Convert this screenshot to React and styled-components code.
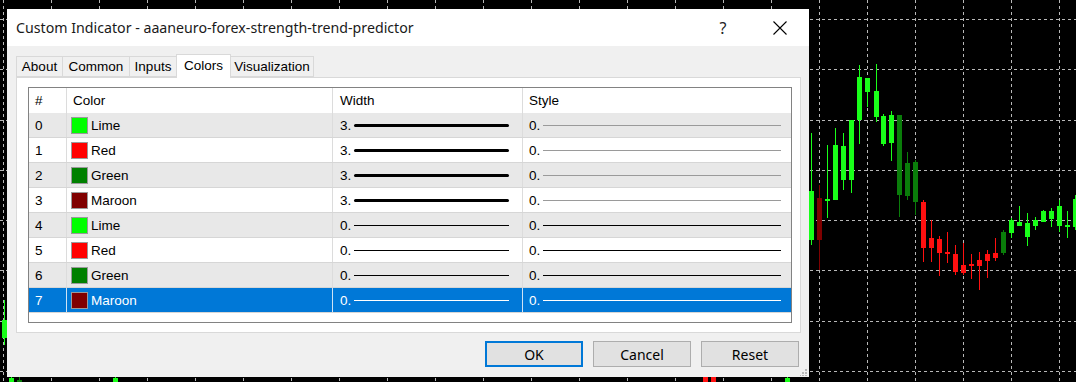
import React from 'react';
import styled, { createGlobalStyle } from 'styled-components';

const GlobalStyle = createGlobalStyle`
  html, body { margin: 0; padding: 0; background: #000; }
  body { width: 1076px; height: 382px; overflow: hidden; }
  * { box-sizing: border-box; }
`;

const Desktop = styled.div`
  position: relative;
  width: 1076px;
  height: 382px;
  background: #000;
  overflow: hidden;
`;

const ChartSvg = styled.svg`
  display: block;
`;

const Dialog = styled.div`
  position: absolute;
  left: 7px;
  top: 9px;
  width: 802px;
  height: 368px;
  background: #f0f0f0;
  display: flex;
  flex-direction: column;
  font-family: "Liberation Sans", Arial, sans-serif;
  color: #000;
`;

const TitleBar = styled.div`
  height: 37px;
  background: #fff;
  display: flex;
  align-items: center;
`;

const Title = styled.div`
  flex: 1;
  padding-left: 9px;
  font-family: "Noto Sans", "Open Sans", sans-serif;
  font-size: 14.2px;
  white-space: nowrap;
  color: #1a1a1a;
`;

const TitleButton = styled.div`
  width: ${(p) => p.$w}px;
  height: 37px;
  display: flex;
  align-items: center;
  justify-content: center;
  font-family: "Noto Sans", sans-serif;
  font-size: 16px;
  color: #222;
`;

const TabStrip = styled.div`
  display: flex;
  align-items: flex-end;
  height: 23px;
  margin-top: 8px;
  padding-left: 9px;
  position: relative;
  z-index: 1;
`;

const Tab = styled.div`
  width: ${(p) => p.$w}px;
  height: ${(p) => (p.$active ? 24 : 21)}px;
  margin-right: -1px;
  border: 1px solid #d9d9d9;
  border-bottom: ${(p) => (p.$active ? 'none' : '1px solid #d9d9d9')};
  background: ${(p) => (p.$active ? '#fff' : '#f0f0f0')};
  display: flex;
  align-items: center;
  justify-content: center;
  font-size: 13.5px;
  padding-bottom: ${(p) => (p.$active ? 3 : 0)}px;
  position: relative;
  z-index: ${(p) => (p.$active ? 2 : 1)};
  margin-bottom: ${(p) => (p.$active ? -1 : 0)}px;
`;

const Panel = styled.div`
  margin-left: 9px;
  width: 785px;
  height: 256px;
  background: #fff;
  border: 1px solid #d9d9d9;
  padding: 9px 0 0 11px;
`;

const ListView = styled.div`
  width: 764px;
  height: 236px;
  border: 1px solid #828282;
  background: #fff;
  display: flex;
  flex-direction: column;
`;

const Row = styled.div`
  display: grid;
  grid-template-columns: 38px 266px 190px 1fr;
  height: 25px;
  border-bottom: ${(p) => (p.$header ? 'none' : '1px solid #d6d6d6')};
  background: ${(p) => (p.$selected ? '#0078d7' : p.$shade ? '#e8e8e8' : '#fff')};
  color: ${(p) => (p.$selected ? '#fff' : '#000')};
`;

const Cell = styled.div`
  display: flex;
  align-items: center;
  padding-left: ${(p) => p.$pl ?? 6}px;
  padding-right: ${(p) => p.$pr ?? 0}px;
  font-size: 13.5px;
  border-right: ${(p) => (p.$last ? 'none' : `1px solid ${p.$selected ? '#cfe3f5' : '#dcdcdc'}`)};
  white-space: nowrap;
`;

const Swatch = styled.span`
  width: 17px;
  height: 17px;
  border: 1px solid #9a9a9a;
  background: ${(p) => p.$color};
  margin-right: 3px;
  flex: none;
`;

const LineSample = styled.span`
  flex: 1;
  height: ${(p) => p.$thick}px;
  border-radius: ${(p) => (p.$thick > 1 ? 2 : 0)}px;
  background: ${(p) => p.$color};
  margin-left: 3px;
`;

const ButtonRow = styled.div`
  display: flex;
  justify-content: flex-end;
  gap: 10px;
  padding: 8px 10px 0 0;
`;

const Button = styled.div`
  width: 98px;
  height: 26px;
  background: #e1e1e1;
  border: ${(p) => (p.$primary ? '2px solid #0078d7' : '1px solid #adadad')};
  display: flex;
  align-items: center;
  justify-content: center;
  font-family: "Noto Sans", sans-serif;
  font-size: 14px;
  color: #000;
`;

const Grip = styled.svg`
  position: absolute;
  right: 2px;
  bottom: 1px;
`;

const LIME = '#19ff19';
const DGREEN = '#0a7d0a';
const RED = '#ff1010';
const MAROON = '#7f0000';

// [x, high, low, bodyTop, bodyBottom, color]
const CANDLES = [
  [4, 300, 345, 320, 338, LIME],
  [11, 370, 400, 378, 400, LIME],
  [19, 372, 400, 380, 400, DGREEN],
  [115, 374, 400, 378, 400, LIME],
  [705, 370, 400, 376, 400, RED],
  [713, 372, 400, 377, 400, RED],
  [787, 372, 400, 378, 400, LIME],
  [811, 133, 245, 191, 240, LIME],
  [819, 185, 270, 198, 240, MAROON],
  [827, 145, 218, 199, 201, LIME],
  [835, 128, 200, 145, 200, LIME],
  [843, 133, 190, 146, 180, LIME],
  [851, 120, 193, 120, 180, LIME],
  [859, 65, 144, 77, 120, LIME],
  [867, 78, 107, 78, 92, LIME],
  [876, 64, 122, 91, 117, LIME],
  [883, 114, 146, 116, 144, LIME],
  [891, 111, 161, 115, 143, LIME],
  [899, 115, 217, 115, 195, DGREEN],
  [907, 152, 200, 163, 196, DGREEN],
  [915, 160, 215, 162, 202, DGREEN],
  [923, 200, 262, 202, 248, RED],
  [931, 220, 262, 238, 248, RED],
  [939, 236, 276, 239, 253, RED],
  [947, 232, 263, 252, 254, RED],
  [955, 245, 275, 254, 272, RED],
  [963, 243, 275, 265, 273, RED],
  [971, 254, 279, 264, 266, RED],
  [979, 252, 290, 260, 266, RED],
  [987, 250, 278, 254, 261, RED],
  [995, 238, 261, 253, 258, RED],
  [1003, 230, 255, 232, 253, DGREEN],
  [1011, 218, 238, 220, 233, LIME],
  [1019, 206, 226, 222, 226, LIME],
  [1027, 213, 246, 223, 237, LIME],
  [1035, 217, 230, 220, 226, LIME],
  [1043, 210, 222, 211, 222, LIME],
  [1051, 208, 227, 211, 219, LIME],
  [1059, 200, 232, 206, 226, LIME],
  [1067, 211, 238, 225, 227, LIME],
  [1075, 195, 230, 199, 227, LIME],
];

const VLINES = Array.from({ length: 23 }, (_, i) => 3 + i * 48);
const HLINES = [19, 69, 120, 170, 220, 270, 321, 371];

function Chart() {
  return (
    <ChartSvg width="1076" height="382" viewBox="0 0 1076 382">
      <rect width="1076" height="382" fill="#000" />
      {VLINES.map((x) => (
        <line key={'v' + x} x1={x + 0.5} y1="0" x2={x + 0.5} y2="382" stroke="#b8b8b8" strokeWidth="1" strokeDasharray="3 3" />
      ))}
      {HLINES.map((y) => (
        <line key={'h' + y} x1="0" y1={y + 0.5} x2="1076" y2={y + 0.5} stroke="#b8b8b8" strokeWidth="1" strokeDasharray="3 3" />
      ))}
      {CANDLES.map(([x, hi, lo, bt, bb, c], i) => (
        <g key={i}>
          <line x1={x + 0.5} y1={hi} x2={x + 0.5} y2={lo} stroke={c} strokeWidth="1" />
          <rect x={x - 2} y={bt} width="5" height={Math.max(1, bb - bt)} fill={c} />
        </g>
      ))}
    </ChartSvg>
  );
}

const TABS = [
  { label: 'About', w: 47 },
  { label: 'Common', w: 68 },
  { label: 'Inputs', w: 48 },
  { label: 'Colors', w: 55 },
  { label: 'Visualization', w: 84 },
];

const ROWS = [
  { name: 'Lime', color: '#00ff00', width: '3.', style: '0.' },
  { name: 'Red', color: '#ff0000', width: '3.', style: '0.' },
  { name: 'Green', color: '#008000', width: '3.', style: '0.' },
  { name: 'Maroon', color: '#800000', width: '3.', style: '0.' },
  { name: 'Lime', color: '#00ff00', width: '0.', style: '0.' },
  { name: 'Red', color: '#ff0000', width: '0.', style: '0.' },
  { name: 'Green', color: '#008000', width: '0.', style: '0.' },
  { name: 'Maroon', color: '#800000', width: '0.', style: '0.' },
];

export default function App() {
  return (
    <>
      <GlobalStyle />
      <Desktop>
        <Chart />
        <Dialog>
          <TitleBar>
            <Title>Custom Indicator - aaaneuro-forex-strength-trend-predictor</Title>
            <TitleButton $w={56}>?</TitleButton>
            <TitleButton $w={58}>
              <svg width="14" height="14" viewBox="0 0 14 14">
                <path d="M0.5 0.5 L13.5 13.5 M13.5 0.5 L0.5 13.5" stroke="#000" strokeWidth="1.1" fill="none" />
              </svg>
            </TitleButton>
          </TitleBar>
          <TabStrip>
            {TABS.map((t) => (
              <Tab key={t.label} $w={t.w} $active={t.label === 'Colors'}>
                {t.label}
              </Tab>
            ))}
          </TabStrip>
          <Panel>
            <ListView>
              <Row $header>
                <Cell>#</Cell>
                <Cell>Color</Cell>
                <Cell $pl={7}>Width</Cell>
                <Cell $last>Style</Cell>
              </Row>
              {ROWS.map((r, i) => {
                const sel = i === 7;
                const thick = r.width === '3.' ? 3 : 1;
                const lineColor = sel ? '#fff' : '#000';
                const styleColor = sel ? '#fff' : i < 4 ? '#9a9a9a' : '#000';
                return (
                  <Row key={i} $shade={i % 2 === 0} $selected={sel}>
                    <Cell $selected={sel}>{i}</Cell>
                    <Cell $selected={sel} $pl={4}>
                      <Swatch $color={r.color} />
                      {r.name}
                    </Cell>
                    <Cell $selected={sel} $pl={7} $pr={13}>
                      {r.width}
                      <LineSample $thick={thick} $color={lineColor} />
                    </Cell>
                    <Cell $selected={sel} $last $pl={6} $pr={10}>
                      {r.style}
                      <LineSample $thick={1} $color={styleColor} />
                    </Cell>
                  </Row>
                );
              })}
            </ListView>
          </Panel>
          <ButtonRow>
            <Button $primary>OK</Button>
            <Button>Cancel</Button>
            <Button>Reset</Button>
          </ButtonRow>
          <Grip width="7" height="7" viewBox="0 0 7 7">
            {[[5, 0], [5, 3], [2, 3], [5, 6], [2, 6], [-1, 6]].map(([x, y], k) => (
              <rect key={k} x={x} y={y} width="2" height="2" fill="#b8b8b8" />
            ))}
          </Grip>
        </Dialog>
      </Desktop>
    </>
  );
}
